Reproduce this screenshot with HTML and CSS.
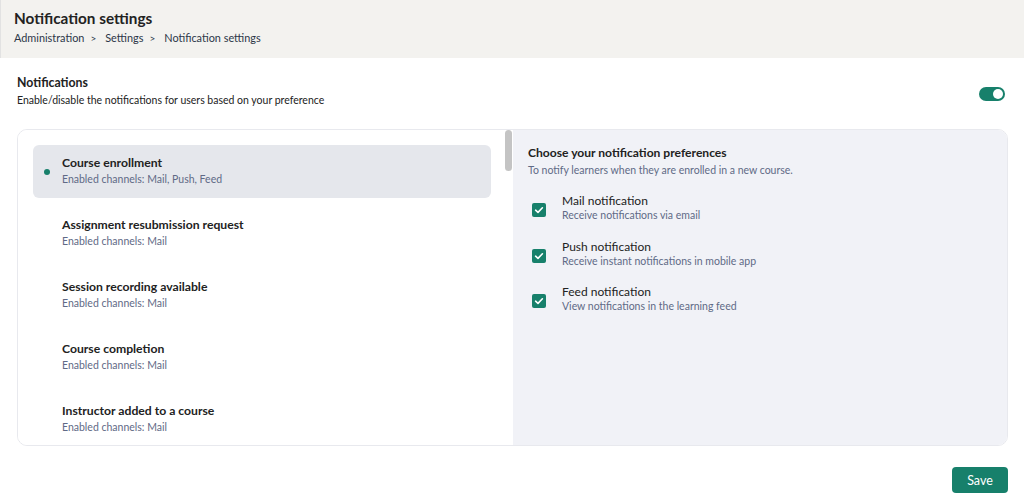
FILE: index.html
```html
<!DOCTYPE html>
<html>
<head>
<meta charset="utf-8">
<link rel="stylesheet" href="styles.css">
</head>
<body>
<header class="page-header">
  <h1 class="page-title">Notification settings</h1>
  <nav class="breadcrumb">
    <span>Administration</span><span class="sep">&gt;</span><span>Settings</span><span class="sep">&gt;</span><span>Notification settings</span>
  </nav>
</header>
<main class="content">
  <section class="section-head">
    <div>
      <h2 class="section-title">Notifications</h2>
      <p class="section-desc">Enable/disable the notifications for users based on your preference</p>
    </div>
    <div class="toggle"><span class="knob"></span></div>
  </section>
  <div class="card">
    <div class="list-pane">
      <ul class="event-list">
        <li class="event active"><span class="dot"></span><div class="event-title">Course enrollment</div><div class="event-sub">Enabled channels: Mail, Push, Feed</div></li>
        <li class="event"><div class="event-title">Assignment resubmission request</div><div class="event-sub">Enabled channels: Mail</div></li>
        <li class="event"><div class="event-title">Session recording available</div><div class="event-sub">Enabled channels: Mail</div></li>
        <li class="event"><div class="event-title">Course completion</div><div class="event-sub">Enabled channels: Mail</div></li>
        <li class="event"><div class="event-title">Instructor added to a course</div><div class="event-sub">Enabled channels: Mail</div></li>
      </ul>
      <div class="scroll-thumb"></div>
    </div>
    <div class="pref-pane">
      <h3 class="pref-title">Choose your notification preferences</h3>
      <p class="pref-desc">To notify learners when they are enrolled in a new course.</p>
      <ul class="options">
        <li class="option">
          <span class="check"><svg viewBox="0 0 14 14" width="14" height="14"><path d="M3.6 7.2 L6 9.4 L10.4 4.8" fill="none" stroke="#fff" stroke-width="1.6" stroke-linecap="round" stroke-linejoin="round"/></svg></span>
          <div><div class="opt-title">Mail notification</div><div class="opt-sub">Receive notifications via email</div></div>
        </li>
        <li class="option">
          <span class="check"><svg viewBox="0 0 14 14" width="14" height="14"><path d="M3.6 7.2 L6 9.4 L10.4 4.8" fill="none" stroke="#fff" stroke-width="1.6" stroke-linecap="round" stroke-linejoin="round"/></svg></span>
          <div><div class="opt-title">Push notification</div><div class="opt-sub">Receive instant notifications in mobile app</div></div>
        </li>
        <li class="option">
          <span class="check"><svg viewBox="0 0 14 14" width="14" height="14"><path d="M3.6 7.2 L6 9.4 L10.4 4.8" fill="none" stroke="#fff" stroke-width="1.6" stroke-linecap="round" stroke-linejoin="round"/></svg></span>
          <div><div class="opt-title">Feed notification</div><div class="opt-sub">View notifications in the learning feed</div></div>
        </li>
      </ul>
    </div>
  </div>
  <div class="actions"><button class="save">Save</button></div>
</main>
</body>
</html>
```
FILE: styles.css
```css
* { box-sizing: border-box; }
html, body { margin: 0; padding: 0; }
body {
  font-family: Lato, "Liberation Sans", sans-serif;
  color: #222;
  background: #fff;
  width: 1024px;
  height: 494px;
  overflow: hidden;
}
.page-header {
  background: #f3f2ef;
  height: 58px;
  padding: 9px 14px 0 13px;
  border-left: 1px solid #e2e2e2;
}
.page-title {
  margin: 0;
  font-size: 15.3px;
  font-weight: 700;
  line-height: 18px;
  color: #222;
}
.breadcrumb {
  margin-top: 4px;
  font-size: 10.9px;
  line-height: 14px;
  color: #2c3648;
}
.breadcrumb .sep { margin: 0 9px 0 6px; font-size: 10px; }
.content { padding: 17px 16px 0 17px; }
.section-head {
  display: flex;
  align-items: center;
  justify-content: space-between;
  padding-right: 3px;
}
.section-title {
  margin: 0;
  font-size: 12.3px;
  font-weight: 700;
  line-height: 16px;
  color: #222;
}
.section-desc {
  margin: 2px 0 0;
  font-size: 10.5px;
  line-height: 15px;
  color: #222;
}
.toggle {
  width: 26px;
  height: 14px;
  background: #17806b;
  border-radius: 7px;
  position: relative;
  margin-top: 4px;
}
.toggle .knob {
  position: absolute;
  right: 2px;
  top: 2px;
  width: 10px;
  height: 10px;
  border-radius: 50%;
  background: #fff;
}
.card {
  margin-top: 21px;
  height: 317px;
  border: 1px solid #e8e9ee;
  border-radius: 10px;
  display: flex;
  overflow: hidden;
}
.list-pane {
  width: 495px;
  flex: none;
  position: relative;
  overflow: hidden;
  background: #fff;
}
.event-list {
  list-style: none;
  margin: 0;
  padding: 15px 22px 0 15px;
  display: flex;
  flex-direction: column;
  gap: 9px;
}
.event {
  position: relative;
  height: 53px;
  padding: 10px 16px 0 29px;
  border-radius: 6px;
}
.event.active { background: #e5e7ec; }
.event .dot {
  position: absolute;
  left: 11px;
  top: 24px;
  width: 6px;
  height: 6px;
  border-radius: 50%;
  background: #17806b;
}
.event-title {
  font-size: 12.2px;
  font-weight: 700;
  line-height: 16px;
  color: #222;
}
.event-sub {
  font-size: 10.5px;
  line-height: 16px;
  color: #5f6a86;
}
.scroll-thumb {
  position: absolute;
  right: 1px;
  top: 0;
  width: 7px;
  height: 41px;
  border-radius: 4px;
  background: #c4c4c4;
}
.pref-pane {
  flex: 1;
  background: #f1f2f7;
  padding: 15px 15px 0 15px;
}
.pref-title {
  margin: 0;
  font-size: 12.1px;
  font-weight: 700;
  line-height: 16px;
  color: #222;
}
.pref-desc {
  margin: 2px 0 0;
  font-size: 10.5px;
  line-height: 15px;
  color: #5f6a86;
}
.options {
  list-style: none;
  margin: 15px 0 0;
  padding: 0 0 0 4px;
  display: flex;
  flex-direction: column;
  gap: 15.5px;
}
.option {
  display: flex;
  align-items: center;
  gap: 16px;
}
.check {
  width: 14px;
  height: 14px;
  border-radius: 2px;
  background: #17806b;
  display: flex;
  flex: none;
  margin-top: 4px;
}
.opt-title {
  font-size: 12px;
  line-height: 15px;
  color: #222;
}
.opt-sub {
  font-size: 10.5px;
  line-height: 15px;
  color: #5f6a86;
}
.actions {
  display: flex;
  justify-content: flex-end;
  margin-top: 21px;
}
.save {
  width: 56px;
  height: 26px;
  border: none;
  border-radius: 4px;
  background: #17806b;
  color: #fff;
  font-family: Lato, "Liberation Sans", sans-serif;
  font-size: 12.5px;
  padding: 0;
}
```
